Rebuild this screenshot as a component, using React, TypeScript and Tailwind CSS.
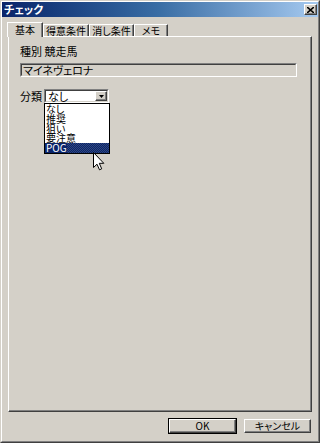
import React from "react";

const sunken =
  "border border-t-[#808080] border-l-[#808080] border-r-white border-b-white";
const sunkenInner =
  "border border-t-[#404040] border-l-[#404040] border-r-[#d4d0c8] border-b-[#d4d0c8]";

function Button({ label, isDefault }: { label: string; isDefault?: boolean }) {
  return (
    <div
      className={
        "w-[69px] h-[16px] " +
        (isDefault ? "border border-black" : "border border-transparent")
      }
    >
      <div className="h-full border border-t-white border-l-white border-r-[#404040] border-b-[#404040]">
        <div className="h-full flex items-center justify-center text-[10px] leading-none shadow-[inset_-1px_-1px_#808080]">
          {label}
        </div>
      </div>
    </div>
  );
}

export default function App() {
  const tabs = ["得意条件", "消し条件", "メモ"];
  const tabW = ["w-[46px]", "w-[45px]", "w-[34px]"];
  const items = ["なし", "推奨", "狙い", "要注意", "POG"];
  return (
    <div className="relative w-[320px] h-[443px] bg-[#d4d0c8] border border-t-[#d4d0c8] border-l-[#d4d0c8] border-r-[#404040] border-b-[#404040] text-black font-['Noto_Sans_CJK_JP',sans-serif] [font-feature-settings:'palt'] select-none">
      <div className="h-full flex flex-col border border-t-white border-l-white border-r-[#808080] border-b-[#808080]">
        {/* Title bar */}
        <div className="h-[15px] bg-linear-to-r from-[#0a246a] via-[#3a6ea5] to-[#a6caf0] flex items-center justify-between pl-[2px] pr-[1px]">
          <span className="text-white font-bold text-[11px] leading-none">チェック</span>
          <div className="w-[13px] h-[11px] bg-[#d4d0c8] border border-t-white border-l-white border-r-[#404040] border-b-[#404040] flex items-center justify-center shadow-[inset_-1px_-1px_#808080]">
            <svg width="7" height="6" viewBox="0 0 7 6">
              <path d="M0 0 L7 6 M7 0 L0 6" stroke="black" strokeWidth="1.6" />
            </svg>
          </div>
        </div>

        {/* Body */}
        <div className="flex-1 flex flex-col px-[6px] pt-[5px]">
          {/* Tab strip */}
          <div className="relative z-10 h-[15px] flex items-end">
            <div className="-ml-[1px] w-[36px] h-[15px] bg-[#d4d0c8] border-t border-l border-r border-t-white border-l-white border-r-[#404040] shadow-[inset_-1px_0_#808080] flex items-start justify-center pt-[1px] text-[10px] leading-[12px]">
              基本
            </div>
            {tabs.map((t, i) => (
              <div
                key={t}
                className={
                  tabW[i] +
                  " h-[12px] mb-[1px] border-t border-l border-r border-t-white border-l-white border-r-[#404040] shadow-[inset_-1px_0_#808080] flex items-center justify-center text-[10px] leading-none whitespace-nowrap"
                }
              >
                {t}
              </div>
            ))}
          </div>

          {/* Panel */}
          <div className="-mt-[1px] h-[376px] border border-t-white border-l-white border-r-[#404040] border-b-[#404040] shadow-[inset_-1px_-1px_#808080] pl-[11px] pt-[7px]">
            <div className="h-[14px] leading-[14px] text-[11px]">種別 競走馬</div>
            <div className={"mt-[5px] w-[277px] h-[14px] " + sunken}>
              <div className={"h-full " + sunkenInner + " text-[11px] leading-[10px] pl-[1px]"}>
                マイネヴェロナ
              </div>
            </div>
            <div className="mt-[12px] flex items-center h-[14px]">
              <span className="text-[11px] leading-none w-[24px]">分類</span>
              <div className="relative">
                <div className={"w-[65px] h-[14px] bg-white " + sunken}>
                  <div className={"h-full flex " + sunkenInner}>
                    <span className="flex-1 text-[11px] leading-[10px] pl-[2px]">なし</span>
                    <div className="w-[12px] h-full bg-[#d4d0c8] border border-t-white border-l-white border-r-[#404040] border-b-[#404040] shadow-[inset_-1px_-1px_#808080] flex items-center justify-center">
                      <svg width="5" height="3" viewBox="0 0 5 3">
                        <path d="M0 0 H5 L2.5 3 Z" fill="black" />
                      </svg>
                    </div>
                  </div>
                </div>
                {/* Dropdown list */}
                <div className="absolute left-0 top-[14px] w-[66px] bg-white border border-black flex flex-col">
                  {items.map((it) => (
                    <div
                      key={it}
                      className={
                        "relative h-[9.75px] leading-[9.75px] text-[10px] pl-[1px] overflow-visible " +
                        (it === "POG" ? "bg-[#0a246a] text-white" : "")
                      }
                    >
                      {it === "POG" && (
                        <span className="absolute right-0 top-0 bottom-0 w-[42px] bg-[repeating-conic-gradient(#0a246a_0_25%,#4a5f8c_0_50%)] bg-[length:2px_2px] opacity-60" />
                      )}
                      <span className="relative">{it}</span>
                    </div>
                  ))}
                </div>
              </div>
            </div>
          </div>

          {/* Buttons */}
          <div className="mt-[6px] flex justify-end gap-[6px]">
            <Button label="OK" isDefault />
            <Button label="キャンセル" />
          </div>
        </div>
      </div>

      {/* Mouse cursor */}
      <svg
        className="absolute left-[92px] top-[151px]"
        width="12"
        height="19"
        viewBox="0 0 12 19"
      >
        <path
          d="M0.5 0.5 L0.5 15.5 L4 12.2 L6.5 17.8 L8.7 16.8 L6.3 11.3 L10.8 11.3 Z"
          fill="white"
          stroke="black"
          strokeWidth="1"
          strokeLinejoin="miter"
        />
      </svg>
    </div>
  );
}
